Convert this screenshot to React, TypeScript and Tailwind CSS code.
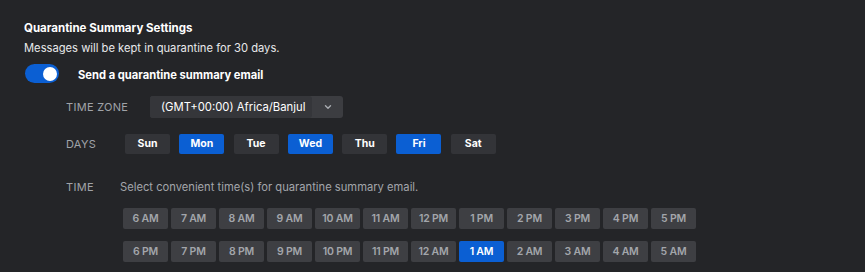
import React, { useState } from 'react';

const DAYS = ['Sun', 'Mon', 'Tue', 'Wed', 'Thu', 'Fri', 'Sat'];
const ROW1 = ['6 AM', '7 AM', '8 AM', '9 AM', '10 AM', '11 AM', '12 PM', '1 PM', '2 PM', '3 PM', '4 PM', '5 PM'];
const ROW2 = ['6 PM', '7 PM', '8 PM', '9 PM', '10 PM', '11 PM', '12 AM', '1 AM', '2 AM', '3 AM', '4 AM', '5 AM'];

export default function App() {
  const [enabled, setEnabled] = useState(true);
  const [days, setDays] = useState<string[]>(['Mon', 'Wed', 'Fri']);
  const [times, setTimes] = useState<string[]>(['1 AM']);

  const toggleDay = (d: string) =>
    setDays(prev => (prev.includes(d) ? prev.filter(x => x !== d) : [...prev, d]));
  const toggleTime = (t: string) =>
    setTimes(prev => (prev.includes(t) ? prev.filter(x => x !== t) : [...prev, t]));

  const timeRow = (row: string[]) => (
    <div className="flex gap-[3px]">
      {row.map(t => {
        const on = times.includes(t);
        return (
          <button
            key={t}
            onClick={() => toggleTime(t)}
            className={`w-[45px] h-[21px] rounded-[2px] text-[10.5px] font-semibold tracking-[-0.2px] flex items-center justify-center ${
              on ? 'bg-[#0b5fd3] text-white font-bold' : 'bg-[#3e3f43] text-[#a3a6ab]'
            }`}
          >
            {t}
          </button>
        );
      })}
    </div>
  );

  return (
    <div
      className="w-[865px] h-[272px] bg-[#242528] text-white overflow-hidden"
      style={{ fontFamily: 'Inter, "Noto Sans", sans-serif' }}
    >
      <div className="pl-[24px] pt-[20px]">
        <h2 className="text-[11.5px] font-bold leading-[16px]">Quarantine Summary Settings</h2>
        <p className="mt-[4px] text-[11.2px] leading-[16px] text-[#e8e9eb]">
          Messages will be kept in quarantine for 30 days.
        </p>
        <div className="mt-[8px] flex items-center gap-[19px] h-[19px]">
          <button
            onClick={() => setEnabled(!enabled)}
            className={`ml-px w-[34px] h-[19px] rounded-full flex items-center px-[2px] ${
              enabled ? 'bg-[#0b5fd3] justify-end' : 'bg-[#4a4b4f] justify-start'
            }`}
          >
            <span className="w-[14px] h-[14px] rounded-full bg-white" />
          </button>
          <span className="text-[11.2px] font-bold mt-[4px]">Send a quarantine summary email</span>
        </div>
      </div>

      <div className="pl-[66px] mt-[13px] flex flex-col">
        <div className="flex items-center h-[22px]">
          <span className="w-[84px] text-[11px] text-[#a0a3a8] tracking-[0.3px]">TIME ZONE</span>
          <div className="flex h-[22px] w-[193px] rounded-[3px] bg-[#3c3d41]">
            <div className="w-[162px] rounded-[3px] bg-[#35363a] flex items-center pl-[11px] text-[11.3px] text-white whitespace-nowrap">
              (GMT+00:00) Africa/Banjul
            </div>
            <div className="flex-1 flex items-center justify-center">
              <svg width="10" height="10" viewBox="0 0 10 10" fill="none">
                <path d="M2.5 3.8 5 6.2l2.5-2.4" stroke="#a9acb1" strokeWidth="1.4" strokeLinecap="round" strokeLinejoin="round" />
              </svg>
            </div>
          </div>
        </div>

        <div className="flex items-center mt-[16px] h-[20px]">
          <span className="w-[59px] text-[11px] text-[#a0a3a8] tracking-[0.3px]">DAYS</span>
          <div className="flex gap-[9.3px]">
            {DAYS.map(d => {
              const on = days.includes(d);
              return (
                <button
                  key={d}
                  onClick={() => toggleDay(d)}
                  className={`w-[45px] h-[20px] rounded-[2px] text-[10.5px] font-bold text-white flex items-center justify-center ${
                    on ? 'bg-[#0b5fd3]' : 'bg-[#333438]'
                  }`}
                >
                  {d}
                </button>
              );
            })}
          </div>
        </div>

        <div className="flex items-center mt-[24px] h-[18px]">
          <span className="w-[54px] text-[11px] text-[#a0a3a8] tracking-[0.3px]">TIME</span>
          <span className="text-[11.2px] text-[#a3a6ab]">Select convenient time(s) for quarantine summary email.</span>
        </div>

        <div className="ml-[57px] mt-[12px] flex flex-col gap-[12px]">
          {timeRow(ROW1)}
          {timeRow(ROW2)}
        </div>
      </div>
    </div>
  );
}
